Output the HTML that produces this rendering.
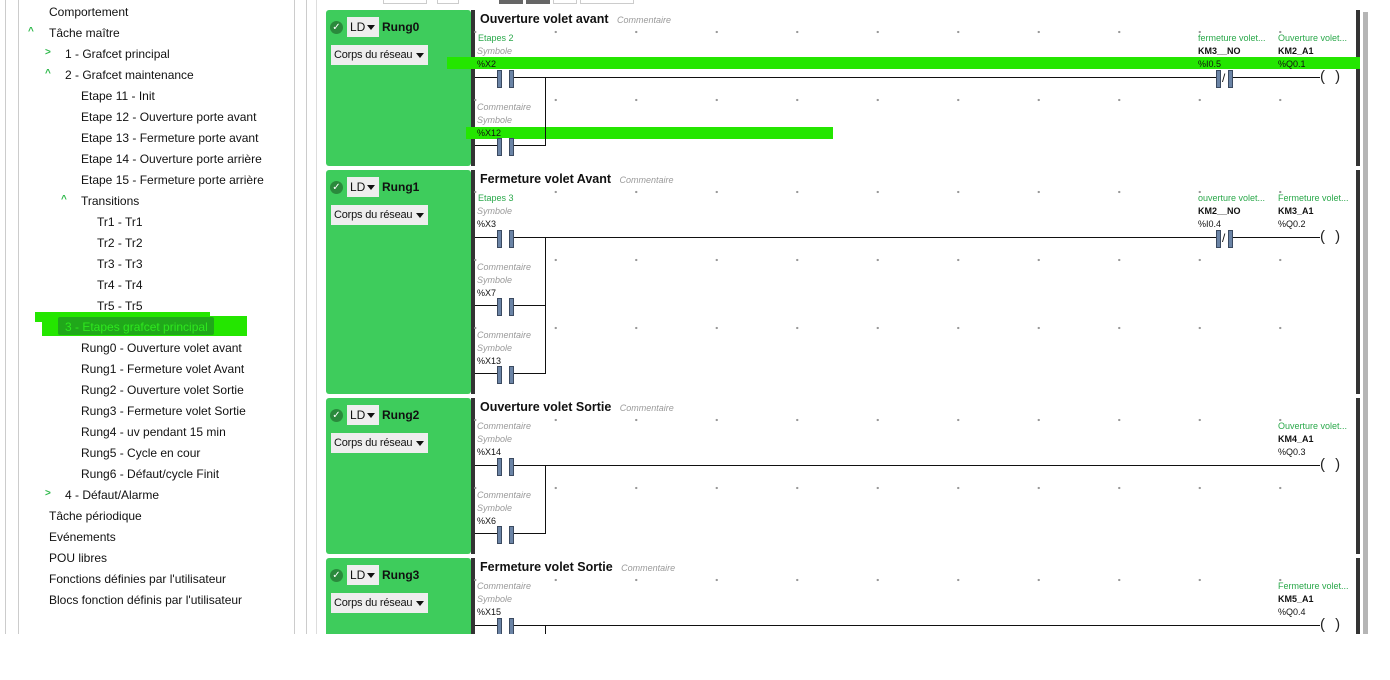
<!DOCTYPE html><html><head><meta charset="utf-8"><style>
*{margin:0;padding:0;box-sizing:border-box}
body{width:1390px;height:680px;background:#fff;font-family:"Segoe UI","Liberation Sans","DejaVu Sans",sans-serif;position:relative;overflow:hidden;color:#111}
.a{position:absolute}
.t{position:absolute;font-size:12px;white-space:nowrap;line-height:14px}
.chev{position:absolute;color:#2db84a;font-size:10px;font-weight:bold}
.rung{position:absolute;left:326px;width:1034px}
.gl{position:absolute;left:0;top:0;width:145px;background:#3ecc5c;border-radius:3px}
.bar{position:absolute;left:145px;top:0;width:4px;background:#333}
.rail{position:absolute;left:1030px;top:0;width:4px;background:#333}
.dots{position:absolute;left:148px;width:882px;background-image:radial-gradient(circle,#999 1px,transparent 1.3px);background-size:80.5px 68px;background-position:-39px -12px}
.ld{position:absolute;left:21px;top:7px;width:32px;height:20px;background:#eee;font-size:12px;line-height:20px;padding-left:3px}
.ld:after{content:"";position:absolute;right:4px;top:8px;border:4px solid transparent;border-top:5px solid #111}
.ck{position:absolute;left:4px;top:11px;width:13px;height:13px;border-radius:50%;background:#2a8a3c;color:#fff;font-size:10px;line-height:13px;text-align:center;font-weight:bold}
.rn{position:absolute;left:56px;top:10px;font-weight:bold;font-size:12px}
.cr{position:absolute;left:5px;top:35px;width:97px;height:20px;background:#eee;font-size:11px;line-height:20px;padding-left:3px;letter-spacing:-0.2px}
.cr:after{content:"";position:absolute;right:4px;top:8px;border:4px solid transparent;border-top:5px solid #111}
.title{position:absolute;left:154px;top:2px;font-weight:bold;font-size:12.5px;white-space:nowrap}
.cm{position:absolute;font-style:italic;color:#9a9a9a;font-size:9px;white-space:nowrap}
.sm{position:absolute;font-size:9px;white-space:nowrap}
.ln{position:absolute;height:1px;background:#111}
.vl{position:absolute;width:1px;background:#111}
.ct{position:absolute;width:16px;height:16px}
.ct:before,.ct:after{content:"";position:absolute;top:0;width:3px;height:16px;background:#6b84a6;border:1px solid #3b4a60}
.ct:before{left:0}.ct:after{left:12px}
.coil{position:absolute;font-size:15px;line-height:16px;color:#222;letter-spacing:3px}
.hl{position:absolute;height:12px;background:#24e600}
</style></head><body>
<div class="a" style="left:5px;top:0;width:1px;height:634px;background:#ccc"></div>
<div class="a" style="left:18px;top:0;width:1px;height:634px;background:#ccc"></div>
<div class="a" style="left:294px;top:0;width:1px;height:634px;background:#ccc"></div>
<div class="a" style="left:306px;top:0;width:1px;height:634px;background:#ccc"></div>
<div class="a" style="left:316px;top:0;width:1px;height:634px;background:#ddd"></div>
<div class="hl" style="left:35px;top:312px;width:175px;height:10px"></div>
<div class="hl" style="left:42px;top:316px;width:205px;height:20px"></div>
<div class="a" style="left:58px;top:317px;width:156px;height:18px;background:#20a81a;border-radius:2px"></div>
<div class="t" style="left:49px;top:5px">Comportement</div>
<div class="chev" style="left:28px;top:26px">^</div><div class="t" style="left:49px;top:26px">Tâche maître</div>
<div class="chev" style="left:45px;top:47px">&gt;</div><div class="t" style="left:65px;top:47px">1 - Grafcet principal</div>
<div class="chev" style="left:45px;top:68px">^</div><div class="t" style="left:65px;top:68px">2 - Grafcet maintenance</div>
<div class="t" style="left:81px;top:89px">Etape 11 - Init</div>
<div class="t" style="left:81px;top:110px">Etape 12 - Ouverture porte avant</div>
<div class="t" style="left:81px;top:131px">Etape 13 - Fermeture porte avant</div>
<div class="t" style="left:81px;top:152px">Etape 14 - Ouverture porte arrière</div>
<div class="t" style="left:81px;top:173px">Etape 15 - Fermeture porte arrière</div>
<div class="chev" style="left:61px;top:194px">^</div><div class="t" style="left:81px;top:194px">Transitions</div>
<div class="t" style="left:97px;top:215px">Tr1 - Tr1</div>
<div class="t" style="left:97px;top:236px">Tr2 - Tr2</div>
<div class="t" style="left:97px;top:257px">Tr3 - Tr3</div>
<div class="t" style="left:97px;top:278px">Tr4 - Tr4</div>
<div class="t" style="left:97px;top:299px">Tr5 - Tr5</div>
<div class="t" style="left:65px;top:320px;color:#2ee81e">3 - Etapes grafcet principal</div>
<div class="t" style="left:81px;top:341px">Rung0 - Ouverture volet avant</div>
<div class="t" style="left:81px;top:362px">Rung1 - Fermeture volet Avant</div>
<div class="t" style="left:81px;top:383px">Rung2 - Ouverture volet Sortie</div>
<div class="t" style="left:81px;top:404px">Rung3 - Fermeture volet Sortie</div>
<div class="t" style="left:81px;top:425px">Rung4 - uv pendant 15 min</div>
<div class="t" style="left:81px;top:446px">Rung5 - Cycle en cour</div>
<div class="t" style="left:81px;top:467px">Rung6 - Défaut/cycle Finit</div>
<div class="chev" style="left:45px;top:488px">&gt;</div><div class="t" style="left:65px;top:488px">4 - Défaut/Alarme</div>
<div class="t" style="left:49px;top:509px">Tâche périodique</div>
<div class="t" style="left:49px;top:530px">Evénements</div>
<div class="t" style="left:49px;top:551px">POU libres</div>
<div class="t" style="left:49px;top:572px">Fonctions définies par l'utilisateur</div>
<div class="t" style="left:49px;top:593px">Blocs fonction définis par l'utilisateur</div>
<div class="a" style="left:383px;top:0;width:44px;height:4px;border:1px solid #ccc;border-top:none"></div>
<div class="a" style="left:437px;top:0;width:22px;height:4px;border:1px solid #ccc;border-top:none"></div>
<div class="a" style="left:499px;top:0;width:24px;height:4px;background:#666"></div>
<div class="a" style="left:526px;top:0;width:24px;height:4px;background:#666"></div>
<div class="a" style="left:553px;top:0;width:24px;height:4px;border:1px solid #ccc;border-top:none"></div>
<div class="a" style="left:580px;top:0;width:54px;height:4px;border:1px solid #ccc;border-top:none"></div>
<div class="a" style="left:1363px;top:12px;width:5px;height:622px;background:#b5b5b5"></div>

<div class="a" style="left:0;top:0;width:1390px;height:634px;overflow:hidden">
<div class="rung" style="top:10px;height:156px">
<div class="gl" style="height:156px"></div><div class="bar" style="height:156px"></div><div class="rail" style="height:156px"></div>
<div class="dots" style="top:0;height:156px"></div>
<div class="ck">✓</div><div class="ld">LD</div><div class="rn">Rung0</div><div class="cr">Corps du réseau</div>
<div class="title">Ouverture volet avant <span style="font-weight:normal;font-style:italic;color:#9a9a9a;font-size:9px;margin-left:5px">Commentaire</span></div>
<div class="hl" style="left:121px;top:47px;width:913px"></div>
<div class="hl" style="left:140px;top:117px;width:367px"></div>
<div class="sm" style="left:152px;top:23px;color:#2aa84a">Etapes 2</div>
<div class="cm" style="left:151px;top:36px">Symbole</div>
<div class="sm" style="left:151px;top:49px">%X2</div>
<div class="cm" style="left:151px;top:92px">Commentaire</div>
<div class="cm" style="left:151px;top:105px">Symbole</div>
<div class="sm" style="left:151px;top:118px">%X12</div>
<div class="ln" style="left:149px;top:67px;width:845px"></div>
<div class="ln" style="left:149px;top:135px;width:70px"></div>
<div class="vl" style="left:219px;top:67px;height:69px"></div>
<div class="ct" style="left:171px;top:60px;background:#fff"></div>
<div class="ct" style="left:171px;top:128px;background:#fff"></div>
<div class="sm" style="left:872px;top:23px;color:#2aa84a">fermeture volet...</div>
<div class="sm" style="left:872px;top:36px;font-weight:bold">KM3__NO</div>
<div class="sm" style="left:872px;top:49px">%I0.5</div>
<div class="sm" style="left:952px;top:23px;color:#2aa84a">Ouverture volet...</div>
<div class="sm" style="left:952px;top:36px;font-weight:bold">KM2_A1</div>
<div class="sm" style="left:952px;top:49px">%Q0.1</div>
<div class="ct" style="left:890px;top:60px;background:#fff"></div><div class="a" style="left:896px;top:60px;font-size:12px;line-height:16px">/</div>
<div class="coil" style="left:994px;top:59px;background:#fff">( )</div>
</div>
<div class="rung" style="top:170px;height:224px">
<div class="gl" style="height:224px"></div><div class="bar" style="height:224px"></div><div class="rail" style="height:224px"></div>
<div class="dots" style="top:0;height:224px"></div>
<div class="ck">✓</div><div class="ld">LD</div><div class="rn">Rung1</div><div class="cr">Corps du réseau</div>
<div class="title">Fermeture volet Avant <span style="font-weight:normal;font-style:italic;color:#9a9a9a;font-size:9px;margin-left:5px">Commentaire</span></div>
<div class="sm" style="left:152px;top:23px;color:#2aa84a">Etapes 3</div>
<div class="cm" style="left:151px;top:36px">Symbole</div>
<div class="sm" style="left:151px;top:49px">%X3</div>
<div class="cm" style="left:151px;top:92px">Commentaire</div><div class="cm" style="left:151px;top:105px">Symbole</div><div class="sm" style="left:151px;top:118px">%X7</div>
<div class="cm" style="left:151px;top:160px">Commentaire</div><div class="cm" style="left:151px;top:173px">Symbole</div><div class="sm" style="left:151px;top:186px">%X13</div>
<div class="ln" style="left:149px;top:67px;width:845px"></div>
<div class="ln" style="left:149px;top:135px;width:70px"></div>
<div class="ln" style="left:149px;top:203px;width:70px"></div>
<div class="vl" style="left:219px;top:67px;height:137px"></div>
<div class="ct" style="left:171px;top:60px;background:#fff"></div>
<div class="ct" style="left:171px;top:128px;background:#fff"></div>
<div class="ct" style="left:171px;top:196px;background:#fff"></div>
<div class="sm" style="left:872px;top:23px;color:#2aa84a">ouverture volet...</div>
<div class="sm" style="left:872px;top:36px;font-weight:bold">KM2__NO</div>
<div class="sm" style="left:872px;top:49px">%I0.4</div>
<div class="sm" style="left:952px;top:23px;color:#2aa84a">Fermeture volet...</div>
<div class="sm" style="left:952px;top:36px;font-weight:bold">KM3_A1</div>
<div class="sm" style="left:952px;top:49px">%Q0.2</div>
<div class="ct" style="left:890px;top:60px;background:#fff"></div><div class="a" style="left:896px;top:60px;font-size:12px;line-height:16px">/</div>
<div class="coil" style="left:994px;top:59px;background:#fff">( )</div>
</div>
<div class="rung" style="top:398px;height:156px">
<div class="gl" style="height:156px"></div><div class="bar" style="height:156px"></div><div class="rail" style="height:156px"></div>
<div class="dots" style="top:0;height:156px"></div>
<div class="ck">✓</div><div class="ld">LD</div><div class="rn">Rung2</div><div class="cr">Corps du réseau</div>
<div class="title">Ouverture volet Sortie <span style="font-weight:normal;font-style:italic;color:#9a9a9a;font-size:9px;margin-left:5px">Commentaire</span></div>
<div class="cm" style="left:151px;top:23px">Commentaire</div><div class="cm" style="left:151px;top:36px">Symbole</div><div class="sm" style="left:151px;top:49px">%X14</div>
<div class="cm" style="left:151px;top:92px">Commentaire</div><div class="cm" style="left:151px;top:105px">Symbole</div><div class="sm" style="left:151px;top:118px">%X6</div>
<div class="ln" style="left:149px;top:67px;width:845px"></div>
<div class="ln" style="left:149px;top:135px;width:70px"></div>
<div class="vl" style="left:219px;top:67px;height:69px"></div>
<div class="ct" style="left:171px;top:60px;background:#fff"></div>
<div class="ct" style="left:171px;top:128px;background:#fff"></div>
<div class="sm" style="left:952px;top:23px;color:#2aa84a">Ouverture volet...</div>
<div class="sm" style="left:952px;top:36px;font-weight:bold">KM4_A1</div>
<div class="sm" style="left:952px;top:49px">%Q0.3</div>
<div class="coil" style="left:994px;top:59px;background:#fff">( )</div>
</div>
<div class="rung" style="top:558px;height:156px">
<div class="gl" style="height:156px"></div><div class="bar" style="height:156px"></div><div class="rail" style="height:156px"></div>
<div class="dots" style="top:0;height:156px"></div>
<div class="ck">✓</div><div class="ld">LD</div><div class="rn">Rung3</div><div class="cr">Corps du réseau</div>
<div class="title">Fermeture volet Sortie <span style="font-weight:normal;font-style:italic;color:#9a9a9a;font-size:9px;margin-left:5px">Commentaire</span></div>
<div class="cm" style="left:151px;top:23px">Commentaire</div><div class="cm" style="left:151px;top:36px">Symbole</div><div class="sm" style="left:151px;top:49px">%X15</div>
<div class="ln" style="left:149px;top:67px;width:845px"></div>
<div class="vl" style="left:219px;top:67px;height:69px"></div>
<div class="ct" style="left:171px;top:60px;background:#fff"></div>
<div class="sm" style="left:952px;top:23px;color:#2aa84a">Fermeture volet...</div>
<div class="sm" style="left:952px;top:36px;font-weight:bold">KM5_A1</div>
<div class="sm" style="left:952px;top:49px">%Q0.4</div>
<div class="coil" style="left:994px;top:59px;background:#fff">( )</div>
</div>
</div>
</body></html>
